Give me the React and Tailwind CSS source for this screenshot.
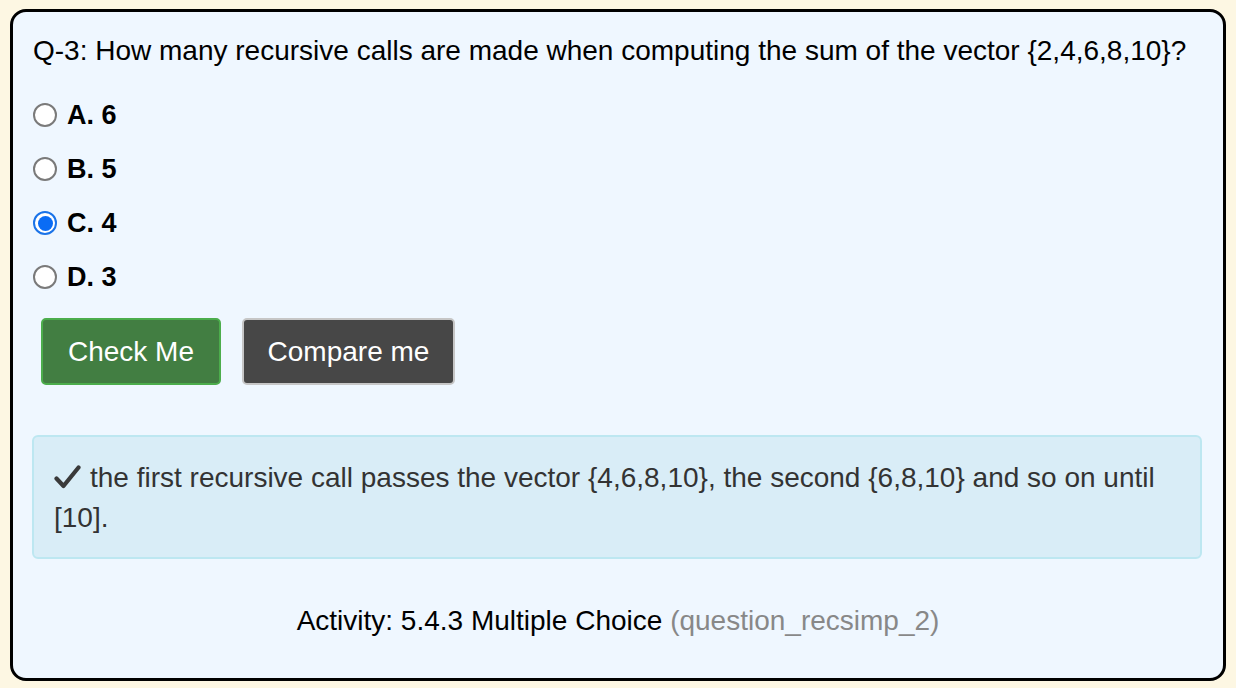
import React from "react";

const options = [
  { id: "A", label: "A. 6" },
  { id: "B", label: "B. 5" },
  { id: "C", label: "C. 4" },
  { id: "D", label: "D. 3" },
];

function Radio({ checked }) {
  return checked ? (
    <span className="w-[24px] h-[24px] rounded-full border-[2px] border-[#1a73e8] bg-white flex items-center justify-center shrink-0">
      <span className="w-[15px] h-[15px] rounded-full bg-[#0a6cf5]" />
    </span>
  ) : (
    <span className="w-[24px] h-[24px] rounded-full border-[2px] border-[#7a7a7a] bg-white shrink-0" />
  );
}

function CheckGlyph() {
  return (
    <svg width="27" height="24" viewBox="0 0 27 24" className="inline-block align-[-2px] mr-[9px]">
      <path
        d="M2.5 13.5 L9.5 21 L24.5 2.5"
        fill="none"
        stroke="#3a3a3a"
        strokeWidth="4.2"
        strokeLinecap="round"
        strokeLinejoin="round"
      />
    </svg>
  );
}

export default function App() {
  return (
    <div
      className="w-[1236px] h-[688px] bg-[#fdf7e3] px-[10px] pt-[9px] pb-[7px]"
      style={{ fontFamily: '"Liberation Sans", Arial, sans-serif' }}
    >
      <div className="h-full border-[3px] border-black rounded-[16px] bg-[#eff7ff] pl-[20px] pr-[20px] pt-[23px]">
        <p className="text-[28px] leading-[32px] text-black whitespace-nowrap">
          Q-3: How many recursive calls are made when computing the sum of the vector {"{2,4,6,8,10}"}?
        </p>
        <div className="mt-[34px] flex flex-col gap-[26px]">
          {options.map((o) => (
            <div key={o.id} className="flex items-center gap-[10px] h-[28px]">
              <Radio checked={o.id === "C"} />
              <span className="text-[27px] font-bold text-black">{o.label}</span>
            </div>
          ))}
        </div>
        <div className="mt-[27px] ml-[8px] flex gap-[21px]">
          <button className="w-[180px] h-[67px] rounded-[5px] bg-[#427e42] border-[2px] border-[#4cad4c] text-white text-[28px]">
            Check Me
          </button>
          <button className="w-[213px] h-[67px] rounded-[5px] bg-[#474747] border-[2px] border-[#c6c6c6] text-white text-[28px]">
            Compare me
          </button>
        </div>
        <div className="mt-[50px] ml-[-1px] mr-[1px] h-[124px] rounded-[6px] bg-[#d9edf7] border-[2px] border-[#bde7f1] pl-[20px] pr-[20px] pt-[21px] text-[28px] leading-[40px] text-[#333]">
          <CheckGlyph />the first recursive call passes the vector {"{4,6,8,10}"}, the second {"{6,8,10}"} and so on until [10].
        </div>
        <p className="mt-[46px] text-center text-[28px] leading-[32px] text-black">
          Activity: 5.4.3 Multiple Choice <span className="text-[#888]">(question_recsimp_2)</span>
        </p>
      </div>
    </div>
  );
}
